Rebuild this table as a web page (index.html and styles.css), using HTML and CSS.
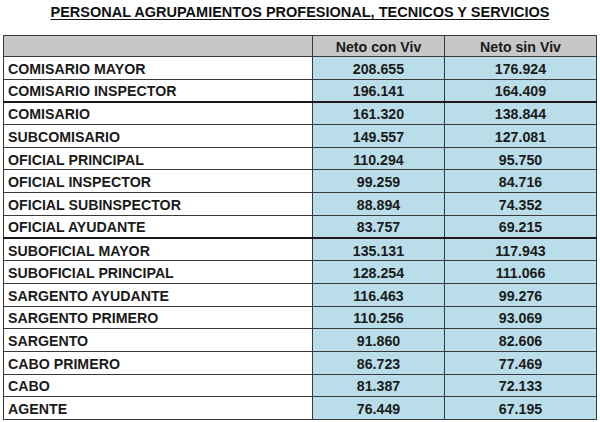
FILE: index.html
```html
<!DOCTYPE html>
<html lang="es">
<head>
<meta charset="utf-8">
<title>Personal Agrupamientos</title>
<link rel="stylesheet" href="styles.css">
</head>
<body>
<div class="page">
  <h1 class="title">PERSONAL AGRUPAMIENTOS PROFESIONAL, TECNICOS Y SERVICIOS</h1>
  <table class="grid">
    <colgroup>
      <col class="c-label">
      <col class="c-num">
      <col class="c-num2">
    </colgroup>
    <thead>
      <tr class="head">
        <th></th>
        <th>Neto con Viv</th>
        <th>Neto sin Viv</th>
      </tr>
    </thead>
    <tbody>
      <tr><td class="lbl">COMISARIO MAYOR</td><td class="num">208.655</td><td class="num">176.924</td></tr>
      <tr class="sep"><td class="lbl">COMISARIO INSPECTOR</td><td class="num">196.141</td><td class="num">164.409</td></tr>
      <tr><td class="lbl">COMISARIO</td><td class="num">161.320</td><td class="num">138.844</td></tr>
      <tr><td class="lbl">SUBCOMISARIO</td><td class="num">149.557</td><td class="num">127.081</td></tr>
      <tr><td class="lbl">OFICIAL PRINCIPAL</td><td class="num">110.294</td><td class="num">95.750</td></tr>
      <tr><td class="lbl">OFICIAL INSPECTOR</td><td class="num">99.259</td><td class="num">84.716</td></tr>
      <tr><td class="lbl">OFICIAL SUBINSPECTOR</td><td class="num">88.894</td><td class="num">74.352</td></tr>
      <tr class="sep"><td class="lbl">OFICIAL AYUDANTE</td><td class="num">83.757</td><td class="num">69.215</td></tr>
      <tr><td class="lbl">SUBOFICIAL MAYOR</td><td class="num">135.131</td><td class="num">117.943</td></tr>
      <tr><td class="lbl">SUBOFICIAL PRINCIPAL</td><td class="num">128.254</td><td class="num">111.066</td></tr>
      <tr><td class="lbl">SARGENTO AYUDANTE</td><td class="num">116.463</td><td class="num">99.276</td></tr>
      <tr><td class="lbl">SARGENTO PRIMERO</td><td class="num">110.256</td><td class="num">93.069</td></tr>
      <tr><td class="lbl">SARGENTO</td><td class="num">91.860</td><td class="num">82.606</td></tr>
      <tr><td class="lbl">CABO PRIMERO</td><td class="num">86.723</td><td class="num">77.469</td></tr>
      <tr><td class="lbl">CABO</td><td class="num">81.387</td><td class="num">72.133</td></tr>
      <tr><td class="lbl">AGENTE</td><td class="num">76.449</td><td class="num">67.195</td></tr>
    </tbody>
  </table>
</div>
</body>
</html>
```

FILE: styles.css
```css
html, body {
  margin: 0;
  padding: 0;
  background: #ffffff;
}

body {
  font-family: "Liberation Sans", Arial, sans-serif;
  color: #1a1a1a;
}

.page {
  width: 600px;
  height: 422px;
  overflow: hidden;
}

.title {
  margin: 0;
  height: 35px;
  padding-top: 4px;
  box-sizing: border-box;
  font-size: 14.5px;
  line-height: 16px;
  font-weight: bold;
  text-align: center;
  text-decoration: underline;
  text-underline-offset: 2px;
  color: #111111;
}

.grid {
  margin-left: 3px;
  width: 593px;
  border-collapse: collapse;
  table-layout: fixed;
  border: 1.5px solid #3a3a3a;
}

.c-label { width: 309px; }
.c-num { width: 132px; }
.c-num2 { width: 152px; }

.grid th,
.grid td {
  border: 1px solid #3a3a3a;
  padding: 2px 0 0 0;
  font-size: 14.2px;
  font-weight: bold;
  line-height: 16px;
}

.head th {
  height: 19px;
  padding-top: 1px;
  background: #c7c7c7;
  text-align: center;
}

.grid tbody tr {
  height: 22.7px;
}

.lbl {
  padding-left: 4px !important;
  text-align: left;
  background: #ffffff;
}

.num {
  text-align: center;
  background: #b9dde9;
}

.grid tr.sep td {
  border-bottom: 2px solid #1a1a1a;
}
```
